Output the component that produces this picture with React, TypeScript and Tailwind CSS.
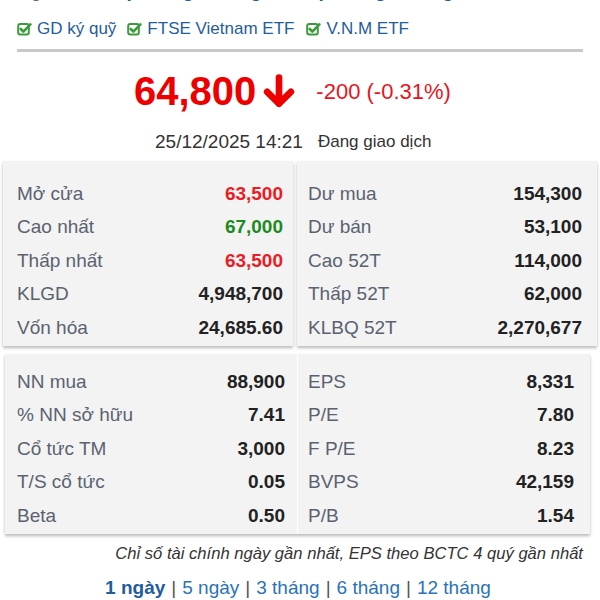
const font = { fontFamily: '"Liberation Sans", Arial, sans-serif' };

function CheckBox() {
  return (
    <svg width="15" height="14" viewBox="0 0 15 14" className="shrink-0">
      <rect x="1.2" y="2" width="10.6" height="10.6" rx="2" fill="none" stroke="#3c9a3c" strokeWidth="2" />
      <path d="M3.8 7 L6.4 9.6 L13.4 2.4" fill="none" stroke="#3c9a3c" strokeWidth="2.6" strokeLinecap="round" strokeLinejoin="round" />
    </svg>
  );
}

function DownArrow() {
  return (
    <svg width="38" height="38" viewBox="0 0 24 24" className="shrink-0">
      <path d="M12 3.5 V20 M4.5 12.5 L12 20 L19.5 12.5" fill="none" stroke="#ee0000" strokeWidth="4.2" strokeLinecap="round" strokeLinejoin="round" />
    </svg>
  );
}

type Row = { label: string; value: string; color?: string };

const box1Left: Row[] = [
  { label: "Mở cửa", value: "63,500", color: "text-[#ec1c24]" },
  { label: "Cao nhất", value: "67,000", color: "text-[#1d8a1d]" },
  { label: "Thấp nhất", value: "63,500", color: "text-[#ec1c24]" },
  { label: "KLGD", value: "4,948,700" },
  { label: "Vốn hóa", value: "24,685.60" },
];

const box1Right: Row[] = [
  { label: "Dư mua", value: "154,300" },
  { label: "Dư bán", value: "53,100" },
  { label: "Cao 52T", value: "114,000" },
  { label: "Thấp 52T", value: "62,000" },
  { label: "KLBQ 52T", value: "2,270,677" },
];

const box2Left: Row[] = [
  { label: "NN mua", value: "88,900" },
  { label: "% NN sở hữu", value: "7.41" },
  { label: "Cổ tức TM", value: "3,000" },
  { label: "T/S cổ tức", value: "0.05" },
  { label: "Beta", value: "0.50" },
];

const box2Right: Row[] = [
  { label: "EPS", value: "8,331" },
  { label: "P/E", value: "7.80" },
  { label: "F P/E", value: "8.23" },
  { label: "BVPS", value: "42,159" },
  { label: "P/B", value: "1.54" },
];

function Rows({ rows }: { rows: Row[] }) {
  return (
    <>
      {rows.map((r) => (
        <div key={r.label} className="flex h-[33.6px] items-center justify-between text-[19px]">
          <span className="text-[#5a6270]">{r.label}</span>
          <span className={`font-bold ${r.color ?? "text-[#222]"}`}>{r.value}</span>
        </div>
      ))}
    </>
  );
}

export default function App() {
  return (
    <div className="h-[600px] w-[600px] overflow-hidden bg-white" style={font}>
      <div className="-mt-[19px] flex h-[20px] items-end pl-[17px] text-[19px] leading-[20px] whitespace-nowrap">
        <span className="text-[#666]">Ngành:</span>
        <span className="ml-[8px] font-bold text-[#1d5a9c]">Sản phẩm gia dụng · Sản phẩm gia dụng</span>
      </div>

      <div className="mt-[18px] flex h-[20px] items-center pl-[17px] text-[17px] text-[#1f5d9e]">
        <CheckBox />
        <span className="ml-[5px]">GD ký quỹ</span>
        <span className="ml-[11px]"><CheckBox /></span>
        <span className="ml-[5px]">FTSE Vietnam ETF</span>
        <span className="ml-[12px]"><CheckBox /></span>
        <span className="ml-[5px]">V.N.M ETF</span>
      </div>

      <div className="mx-[17px] mt-[10px] h-[3px] bg-[#c9c9c9]" />

      <div className="mt-[17px] flex h-[44px] items-center pl-[134px]">
        <span className="text-[40px] leading-none font-bold text-[#ee0000]">64,800</span>
        <span className="ml-[4px]"><DownArrow /></span>
        <span className="ml-[18px] text-[22px] text-[#e8141c]">-200 (-0.31%)</span>
      </div>

      <div className="mt-[18px] flex h-[22px] items-center pl-[155px] text-[#333]">
        <span className="text-[19px]">25/12/2025 14:21</span>
        <span className="ml-[15px] text-[17px]">Đang giao dịch</span>
      </div>

      <div className="mt-[8px] ml-[3px] grid w-[594px] grid-cols-[290px_300px] gap-[4px]">
        <div className="bg-[#f3f3f3] pt-[16px] pr-[10px] pb-[1px] pl-[14px] shadow-[0_2px_3px_rgba(0,0,0,0.28)]">
          <Rows rows={box1Left} />
        </div>
        <div className="bg-[#f3f3f3] pt-[16px] pr-[15px] pb-[1px] pl-[11px] shadow-[0_2px_3px_rgba(0,0,0,0.28)]">
          <Rows rows={box1Right} />
        </div>
      </div>

      <div className="mt-[8px] ml-[5px] grid w-[585px] grid-cols-[292px_292px] gap-[1px] shadow-[0_2px_3px_rgba(0,0,0,0.28)]">
        <div className="bg-[#f3f3f3] pt-[11px] pr-[12px] pb-[1px] pl-[12px]">
          <Rows rows={box2Left} />
        </div>
        <div className="bg-[#f3f3f3] pt-[11px] pr-[16px] pb-[1px] pl-[10px]">
          <Rows rows={box2Right} />
        </div>
      </div>

      <div className="mt-[8px] pr-[17px] text-right text-[16.6px] text-[#333] italic">
        Chỉ số tài chính ngày gần nhất, EPS theo BCTC 4 quý gần nhất
      </div>

      <div className="mt-[7px] flex items-center justify-center pr-[4px] text-[19px] text-[#2a73b8]">
        <span className="font-bold text-[#1f5d9e]">1 ngày</span>
        <span className="mx-[6px] text-[#555]">|</span>
        <span>5 ngày</span>
        <span className="mx-[6px] text-[#555]">|</span>
        <span>3 tháng</span>
        <span className="mx-[6px] text-[#555]">|</span>
        <span>6 tháng</span>
        <span className="mx-[6px] text-[#555]">|</span>
        <span>12 tháng</span>
      </div>
    </div>
  );
}
